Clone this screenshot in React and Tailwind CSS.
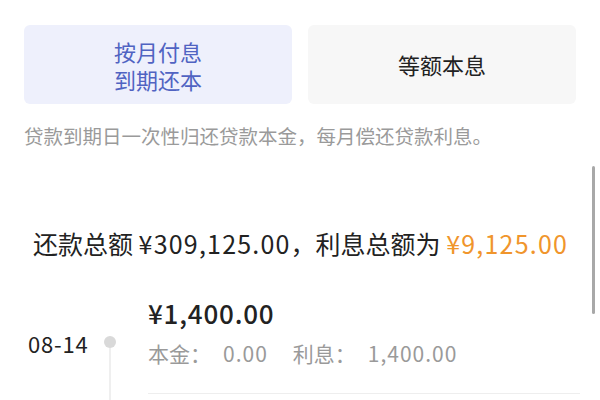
import React from 'react'

const font = { fontFamily: '"Noto Sans CJK SC", "Noto Sans", sans-serif' }

const App = () => {
  return (
    <div className="relative w-[600px] h-[400px] overflow-hidden bg-white" style={font}>
      <div className="px-6 pt-[25px]">
        <div className="grid grid-cols-2 gap-[16px]">
          <div className="h-[79px] rounded-md bg-[#eef0fc] flex items-center justify-center text-center text-[22px] leading-[28px] text-[#5063c2]">
            <p>按月付息<br />到期还本</p>
          </div>
          <div className="h-[79px] rounded-md bg-[#f7f7f7] flex items-center justify-center text-[22px] text-[#222]">
            等额本息
          </div>
        </div>
        <p className="mt-[19px] text-[19.5px] leading-[26px] text-[#9a9a9a] whitespace-nowrap">
          贷款到期日一次性归还贷款本金，每月偿还贷款利息。
        </p>
      </div>

      <div className="mt-[78px] pl-[33px] text-[25px] leading-[32px] text-[#222] whitespace-nowrap">
        还款总额 <span className="tracking-[1.2px]">¥309,125.00</span>，利息总额为 <span className="text-[#f0952c] tracking-[1.2px]">¥9,125.00</span>
      </div>

      <div className="mt-[38px] flex">
        <div className="w-[148px] shrink-0 relative">
          <span className="absolute left-[28px] top-[32px] text-[22px] leading-[28px] tracking-[0.8px] text-[#222]">08-14</span>
          <span className="absolute left-[104px] top-[39px] w-[12px] h-[12px] rounded-full bg-[#d9d9d9]"></span>
          <span className="absolute left-[109px] top-[51px] w-[2px] h-[60px] bg-[#efefef]"></span>
        </div>
        <div className="flex-1 pr-[20px]">
          <div className="text-[26px] leading-[32px] font-medium tracking-[0.8px] text-[#222]">¥1,400.00</div>
          <div className="mt-[11px] text-[21px] leading-[26px] text-[#9a9a9a] whitespace-nowrap">
            <span>本金：</span>
            <span className="ml-[12px] tracking-[1px]">0.00</span>
            <span className="ml-[25px]">利息：</span>
            <span className="ml-[12px] tracking-[1px]">1,400.00</span>
          </div>
          <div className="mt-[27px] h-px bg-[#eeeeee]"></div>
        </div>
      </div>

      <div className="absolute right-[5px] top-[166px] w-[3px] h-[148px] rounded-full bg-[#a8a8a8]"></div>
    </div>
  )
}

export default App
